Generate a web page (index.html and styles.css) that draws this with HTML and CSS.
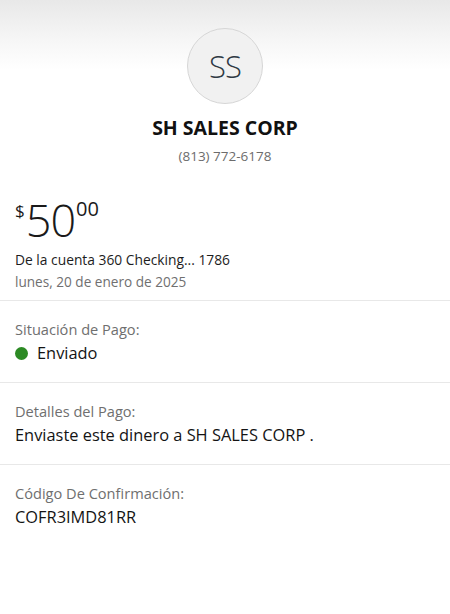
FILE: index.html
```html
<!DOCTYPE html>
<html lang="es">
<head>
    <meta charset="UTF-8">
    <meta name="viewport" content="width=device-width, initial-scale=1.0">
    <title>Detalles del pago</title>
    <link rel="stylesheet" href="styles.css">
</head>
<body>
    <div class="page">
        <!-- cabecera con el destinatario -->
        <div class="header">
            <div class="avatar">SS</div>
            <h1 class="payee">SH SALES CORP</h1>
            <p class="phone">(813) 772-6178</p>
        </div>

        <!-- importe -->
        <div class="summary">
            <div class="amount"><span class="currency">$</span><span class="whole">50</span><span class="cents">00</span></div>
            <p class="account">De la cuenta 360 Checking... 1786</p>
            <p class="date">lunes, 20 de enero de 2025</p>
        </div>

        <div class="row">
            <p class="label">Situación de Pago:</p>
            <p class="value"><span class="dot"></span>Enviado</p>
        </div>

        <div class="row">
            <p class="label">Detalles del Pago:</p>
            <p class="value">Enviaste este dinero a SH SALES CORP .</p>
        </div>

        <div class="row last">
            <p class="label">Código De Confirmación:</p>
            <p class="value">COFR3IMD81RR</p>
        </div>
    </div>
</body>
</html>
```

FILE: styles.css
```css
/* reset */
body, html {
    margin: 0;
    padding: 0;
    background: #fff;
    font-family: "Open Sans", "Noto Sans", Arial, sans-serif;
    color: #161616;
}

p, h1 {
    margin: 0;
}

.page {
    width: 450px;
    min-height: 614px;
}

/* cabecera */
.header {
    display: flex;
    flex-direction: column;
    align-items: center;
    padding-top: 28px;
    height: 172px;
    box-sizing: border-box;
    background: linear-gradient(to bottom, #e8e8e8 0, #f6f6f6 40px, #fff 70px);
}

.avatar {
    width: 74px;
    height: 74px;
    border-radius: 50%;
    border: 1px solid #d6d6d6;
    background: #f1f1f1;
    display: flex;
    align-items: center;
    justify-content: center;
    font-size: 31px;
    font-weight: 300;
    color: #2f3a44;
    letter-spacing: -1px;
}

.payee {
    margin-top: 11px;
    font-size: 19.5px;
    font-weight: 700;
    line-height: 26px;
    color: #111;
}

.phone {
    margin-top: 6px;
    font-size: 13.5px;
    line-height: 18px;
    color: #6c6c6c;
}

/* importe */
.summary {
    padding: 25px 15px 8px;
    border-bottom: 1px solid #e8e8e8;
}

.amount {
    display: flex;
    align-items: flex-start;
    height: 46px;
    color: #1a1a1a;
}

.currency {
    font-size: 17px;
    line-height: 20px;
    margin-top: 4px;
    margin-right: 1px;
}

.whole {
    font-size: 45px;
    font-weight: 300;
    line-height: 46px;
    letter-spacing: -1px;
}

.cents {
    font-size: 20px;
    line-height: 22px;
    margin-top: 1px;
    margin-left: 1px;
}

.account {
    margin-top: 7px;
    font-size: 13.8px;
    line-height: 20px;
    color: #1d1d1d;
}

.date {
    margin-top: 2px;
    font-size: 13.6px;
    line-height: 20px;
    color: #707070;
}

/* filas */
.row {
    padding: 17px 15px 17px;
    border-bottom: 1px solid #e8e8e8;
}

.row.last {
    border-bottom: none;
}

.label {
    font-size: 14.6px;
    line-height: 22px;
    color: #6f6f6f;
}

.value {
    margin-top: 1px;
    font-size: 16.4px;
    line-height: 24px;
    color: #141414;
    display: flex;
    align-items: center;
}

.dot {
    width: 13px;
    height: 13px;
    border-radius: 50%;
    background: #2c8a24;
    margin-right: 9px;
}
```
